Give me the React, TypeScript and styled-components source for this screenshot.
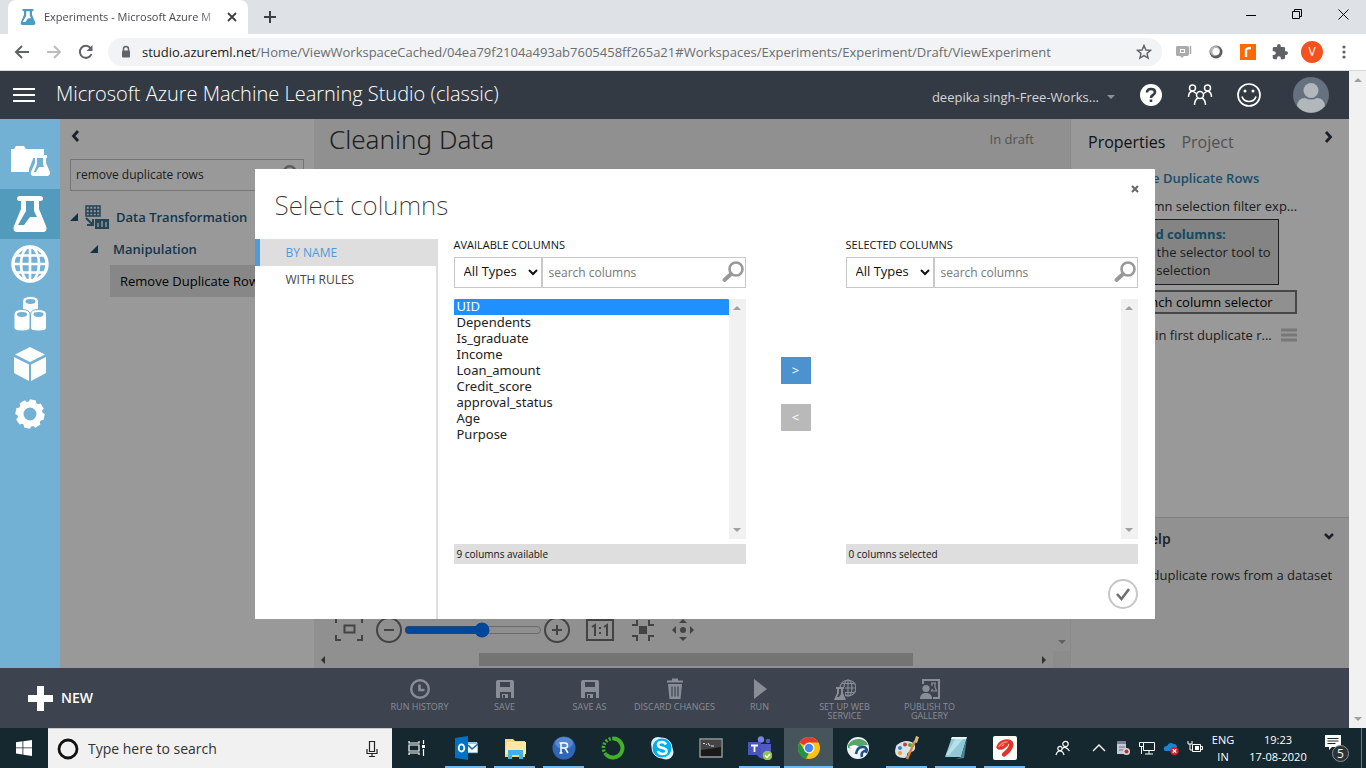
import React from "react";
import styled, { createGlobalStyle, css } from "styled-components";

const GlobalStyle = createGlobalStyle`
  *, *::before, *::after { box-sizing: border-box; }
  body {
    margin: 0;
    font-family: "Open Sans", "Noto Sans", sans-serif;
    font-size: 13px;
    line-height: 18px;
    color: #222;
    background: #fff;
  }
  button, input, select { font: inherit; color: inherit; margin: 0; }
  button { border: 0; padding: 0; background: none; cursor: pointer; }
  svg { display: block; flex: none; }
  h1, h2, h3, p, ul { margin: 0; padding: 0; font-size: inherit; font-weight: 400; }
  ul { list-style: none; }
  a { color: inherit; text-decoration: none; }
`;

const Screen = styled.div`
  display: flex;
  flex-direction: column;
  height: 100vh;
  overflow: hidden;
`;

/* ---------- browser chrome ---------- */

const TabStrip = styled.div`
  display: flex;
  align-items: flex-end;
  height: 34px;
  flex: none;
  padding-left: 8px;
  background: #dee1e6;
`;

const BrowserTab = styled.div`
  display: flex;
  align-items: center;
  gap: 8px;
  width: 240px;
  height: 34px;
  padding: 0 10px 0 12px;
  border-radius: 8px 8px 0 0;
  background: #fff;
  font-size: 11px;
  color: #45494d;
`;

const TabTitle = styled.span`
  flex: 1;
  white-space: nowrap;
  mask-image: linear-gradient(90deg, #000 90%, rgba(0, 0, 0, 0.2));
`;

const NewTab = styled.button`
  display: grid;
  place-items: center;
  width: 44px;
  height: 34px;
`;

const WindowButtons = styled.div`
  display: flex;
  align-self: flex-start;
  margin-left: auto;
  button {
    display: grid;
    place-items: center;
    width: 46px;
    height: 29px;
  }
`;

const Toolbar = styled.div`
  display: flex;
  align-items: center;
  height: 37px;
  flex: none;
  padding: 0 6px;
  border-bottom: 1px solid #d5d7da;
  background: #fff;
`;

const ToolButton = styled.button`
  display: grid;
  place-items: center;
  width: 32px;
  height: 28px;
`;

const AddressBar = styled.div`
  display: flex;
  align-items: center;
  gap: 10px;
  flex: 1;
  height: 28px;
  margin: 0 6px 0 6px;
  padding: 0 10px 0 12px;
  border-radius: 14px;
  background: #f1f3f4;
  color: #6a6d71;
`;

const Url = styled.a`
  flex: 1;
  overflow: hidden;
  white-space: nowrap;
  b { font-weight: 400; color: #202124; }
`;

const Avatar = styled.span`
  display: grid;
  place-items: center;
  width: 22px;
  height: 22px;
  border-radius: 50%;
  background: #f4511e;
  color: #fff;
  font-size: 12px;
`;

/* ---------- page frame ---------- */

const Page = styled.div`
  display: flex;
  flex: 1;
  min-height: 0;
`;

const Site = styled.div`
  display: flex;
  flex-direction: column;
  flex: 1;
  min-width: 0;
`;

const ScrollTrack = styled.div<{ $fill?: string }>`
  display: flex;
  flex-direction: column;
  justify-content: space-between;
  align-items: center;
  width: 17px;
  flex: none;
  padding: 5px 0;
  background: ${(p) => p.$fill ?? "#f1f1f1"};
`;

const SiteHeader = styled.header`
  display: flex;
  align-items: center;
  height: 48px;
  flex: none;
  padding: 0 20px 0 12px;
  background: #333a43;
  color: #fff;
`;

const SiteTitle = styled.h1`
  flex: 1;
  margin-left: 20px;
  padding-bottom: 2px;
  font-size: 20px;
  line-height: 28px;
  font-weight: 300;
`;

const Workspace = styled.button`
  display: flex;
  align-items: center;
  gap: 8px;
  margin-right: 24px;
  padding-top: 4px;
  color: #d3d6d9;
`;

const HeaderIcons = styled.div`
  display: flex;
  align-items: center;
  gap: 24px;
  margin-right: 32px;
`;

const Main = styled.div`
  display: flex;
  flex: 1;
  min-height: 0;
`;

const Rail = styled.nav`
  display: flex;
  flex-direction: column;
  width: 60px;
  flex: none;
  padding-top: 20px;
  background: #72b1d3;
`;

const RailLink = styled.a<{ $active?: boolean }>`
  display: grid;
  place-items: center;
  height: 50px;
  background: ${(p) => (p.$active ? "#529bbd" : "none")};
`;

const Workbench = styled.div`
  position: relative;
  display: flex;
  flex: 1;
  min-width: 0;
`;

const Backdrop = styled.div`
  position: absolute;
  inset: 0;
  display: grid;
  place-items: center;
  background: rgba(0, 0, 0, 0.4);
`;

/* ---------- left palette ---------- */

const Palette = styled.section`
  width: 254px;
  flex: none;
  padding: 7px 10px;
  background: #fff;
`;

const Collapse = styled.button`
  display: grid;
  place-items: center;
  width: 8px;
  height: 20px;
`;

const PaletteSearch = styled.div`
  display: flex;
  align-items: center;
  height: 32px;
  margin: 13px 0 10px;
  padding: 0 5px;
  border: 1px solid #c4c4c4;
  input {
    flex: 1;
    min-width: 0;
    padding: 0;
    border: 0;
    outline: 0;
    background: none;
    color: #333;
    font-size: 12px;
  }
`;

const TreeRow = styled.li<{ $depth: number; $leaf?: boolean }>`
  display: flex;
  align-items: center;
  gap: 7px;
  height: 32px;
  margin-left: ${(p) => p.$depth * 20}px;
  padding-left: ${(p) => (p.$leaf ? 10 : 0)}px;
  background: ${(p) => (p.$leaf ? "#e2e2e2" : "none")};
  color: ${(p) => (p.$leaf ? "#000" : "#245b80")};
  font-weight: ${(p) => (p.$leaf ? 400 : 600)};
  white-space: nowrap;
  overflow: hidden;
`;

const TreeLabel = styled.span<{ $gap?: number }>`
  margin-left: ${(p) => p.$gap ?? 0}px;
`;

/* ---------- canvas ---------- */

const Canvas = styled.section`
  display: flex;
  flex-direction: column;
  flex: 1;
  min-width: 0;
  background: #f1f1f1;
`;

const CanvasHead = styled.div`
  display: flex;
  justify-content: space-between;
  align-items: center;
  height: 52px;
  padding: 0 36px 12px 15px;
  color: #8a8a8a;
  h2 {
    font-family: "Noto Sans", sans-serif;
    font-size: 26px;
    line-height: 36px;
    font-weight: 300;
    color: #333;
  }
`;

const CanvasBody = styled.div`
  display: flex;
  flex: 1;
  min-height: 0;
`;

const CanvasArea = styled.div`
  display: flex;
  flex: 1;
  align-items: flex-end;
  padding: 0 20px 7px 21px;
`;

const ZoomBar = styled.div`
  display: flex;
  align-items: center;
  height: 28px;
`;

const ZoomButton = styled.button<{ $gap?: number }>`
  margin-left: ${(p) => p.$gap ?? 0}px;
`;

const ZoomRange = styled.input`
  width: 138px;
  height: 16px;
  margin: 0 2px;
`;

const HScroll = styled.div`
  display: flex;
  align-items: center;
  justify-content: space-between;
  height: 17px;
  flex: none;
  padding-left: 5px;
`;

const HTrack = styled.div`
  display: flex;
  flex: 1;
  justify-content: center;
  padding-left: 25px;
`;

const HThumb = styled.div`
  width: 63%;
  height: 13px;
  background: #c1c1c1;
`;

const Corner = styled.div`
  width: 17px;
  height: 17px;
  margin-left: 5px;
  background: #e9e9e9;
`;

/* ---------- right panel ---------- */

const Side = styled.section`
  display: flex;
  flex-direction: column;
  width: 279px;
  flex: none;
  border-left: 1px solid #e4e4e4;
  background: #fff;
`;

const Properties = styled.div`
  flex: 1;
  padding: 8px 15px 0 17px;
`;

const SideTabs = styled.div`
  display: flex;
  gap: 16px;
  justify-content: flex-start;
  height: 30px;
  font-size: 16px;
  line-height: 30px;
  button { color: #888; }
  button:first-child { color: #222; }
  button:last-child { align-self: flex-start; height: 20px; margin-left: auto; }
`;

const SideHeading = styled.h3`
  margin: 12px 0 10px 21px;
  color: #2e84ae;
  font-weight: 600;
`;

const SideText = styled.p`
  padding-left: 14px;
  color: #333;
`;

const Summary = styled.div`
  width: 191px;
  margin: 4px 0 5px;
  padding: 5px 2px 5px 20px;
  border: 1px solid #333;
  background: #dcdcdc;
  color: #333;
  b { color: #247ba0; font-weight: 700; }
`;

const Launch = styled.button`
  width: 209px;
  height: 24px;
  padding-left: 16px;
  border: 2px solid #777;
  background: #f1f1f1;
  color: #000;
`;

const RetainRow = styled.div`
  display: flex;
  align-items: center;
  justify-content: space-between;
  width: 209px;
  margin-top: 12px;
  padding-left: 40px;
  color: #333;
`;

const Help = styled.div`
  height: 151px;
  padding: 12px 15px 0 22px;
  border-top: 1px solid #d8d8d8;
  background: #f2f2f2;
  color: #333;
  h3 { font-size: 14px; font-weight: 600; line-height: 18px; padding-left: 4px; }
`;

const HelpHead = styled.div`
  display: flex;
  justify-content: space-between;
  align-items: flex-start;
  margin-bottom: 18px;
`;

/* ---------- dialog ---------- */

const Dialog = styled.div`
  display: flex;
  flex-direction: column;
  width: 900px;
  height: 450px;
  background: #fff;
`;

const DialogHead = styled.div`
  display: flex;
  justify-content: space-between;
  align-items: flex-start;
  height: 70px;
  flex: none;
  padding: 15px 15px 0 20px;
  h2 {
    font-family: "Noto Sans", sans-serif;
    font-size: 26px;
    line-height: 42px;
    font-weight: 200;
    color: #333;
  }
  button { height: 10px; }
`;

const DialogBody = styled.div`
  display: flex;
  flex: 1;
`;

const DialogNav = styled.div`
  width: 183px;
  border-right: 2px solid #dedede;
`;

const NavItem = styled.button<{ $active?: boolean }>`
  display: block;
  width: 100%;
  height: 27px;
  padding: 1px 0 0 26px;
  border-left: 5px solid ${(p) => (p.$active ? "#4f9bd8" : "transparent")};
  background: ${(p) => (p.$active ? "#dedede" : "none")};
  color: ${(p) => (p.$active ? "#4f9bd8" : "#444")};
  font-size: 12px;
  text-align: left;
`;

const Picker = styled.div`
  display: flex;
  flex-direction: column;
  flex: 1;
  padding: 0 17px 10px 16px;
`;

const Columns = styled.div`
  display: flex;
`;

const ColumnBox = styled.div`
  flex: 1;
`;

const ColumnTitle = styled.h3`
  height: 18px;
  line-height: 12px;
  font-size: 11px;
  color: #111;
`;

const Filter = styled.div`
  display: flex;
  height: 31px;
  margin-bottom: 11px;
  border: 1px solid #c8c8c8;
  select {
    width: 88px;
    padding: 0 0 2px 5px;
    border: 0;
    border-right: 2px solid #c8c8c8;
    background: #fff;
    color: #111;
    outline: 0;
  }
  input {
    flex: 1;
    min-width: 0;
    padding: 1px 0 0 6px;
    border: 0;
    outline: 0;
    font-size: 12px;
  }
  input::placeholder { color: #777; }
`;

const ListFrame = styled.div`
  display: flex;
  height: 240px;
  margin-bottom: 5px;
`;

const List = styled.select`
  flex: 1;
  padding: 0;
  border: 0;
  outline: 0;
  overflow: hidden;
  font-family: "Noto Sans", sans-serif;
  font-size: 13px;
  background: #fff;
  option {
    display: flex;
    align-items: center;
    height: 16px;
    min-height: 16px;
    padding: 0 3px 1px;
    color: #222;
  }
  option:checked {
    background: #1e90ff linear-gradient(#1e90ff, #1e90ff);
    -webkit-text-fill-color: #fff;
  }
`;

const Status = styled.p`
  height: 20px;
  padding-left: 3px;
  background: #dedede;
  color: #111;
  font-size: 10px;
  line-height: 20px;
`;

const Movers = styled.div`
  display: flex;
  flex-direction: column;
  align-items: center;
  gap: 20px;
  width: 100px;
  padding-top: 118px;
`;

const Mover = styled.button<{ $on?: boolean }>`
  width: 30px;
  height: 27px;
  background: ${(p) => (p.$on ? "#4b92cf" : "#b9b9b9")};
  color: #fff;
`;

const Confirm = styled.button`
  align-self: flex-end;
  margin-top: 15px;
`;

/* ---------- command bar ---------- */

const CommandBar = styled.footer`
  display: grid;
  grid-template-columns: 1fr auto 1fr;
  height: 60px;
  flex: none;
  background: #3d434f;
`;

const NewButton = styled.button`
  display: flex;
  align-items: center;
  gap: 8px;
  padding-left: 28px;
  color: #fff;
  font-size: 14px;
  font-weight: 600;
`;

const Commands = styled.div`
  display: flex;
`;

const Command = styled.button`
  display: flex;
  flex-direction: column;
  align-items: center;
  gap: 2px;
  width: 85px;
  padding-top: 10px;
  color: #898e96;
  font-size: 9px;
  line-height: 9px;
  span { max-width: 82px; }
`;

/* ---------- taskbar ---------- */

const Taskbar = styled.div`
  display: flex;
  height: 40px;
  flex: none;
  background: #16282f;
  color: #fff;
`;

const StartButton = styled.button`
  display: grid;
  place-items: center;
  width: 48px;
`;

const TaskSearch = styled.label`
  display: flex;
  align-items: center;
  gap: 9px;
  width: 344px;
  padding: 0 13px 0 9px;
  border-top: 1px solid #c8c8c8;
  background: #f1f1f1;
  color: #333;
  input {
    flex: 1;
    min-width: 0;
    padding: 0;
    border: 0;
    outline: 0;
    background: none;
    font-size: 14px;
  }
  input::placeholder { color: #333; }
`;

const Apps = styled.div`
  display: flex;
`;

const TaskApp = styled.button<{ $open?: boolean; $active?: boolean }>`
  position: relative;
  display: grid;
  place-items: center;
  width: 49px;
  ${(p) => p.$active && css`background: #46555c;`}
  ${(p) =>
    (p.$open || p.$active) &&
    css`
      &::after {
        content: "";
        position: absolute;
        bottom: 0;
        left: ${p.$active ? 0 : 4}px;
        right: ${p.$active ? 0 : 4}px;
        height: 2px;
        background: #76b9ed;
      }
    `}
`;

const Tray = styled.div`
  display: flex;
  align-items: center;
  gap: 8px;
  margin-left: auto;
  padding-right: 4px;
  text-align: center;
`;

const TrayText = styled.div<{ $w: number }>`
  width: ${(p) => p.$w}px;
  line-height: 17px;
  font-size: 11px;
  white-space: nowrap;
`;

const ShowDesktop = styled.div`
  width: 1px;
  height: 40px;
  background: #6c787d;
`;

/* ---------- drawings ---------- */

const Svg = ({ w, h = w, vb, children, label }: { w: number; h?: number; vb?: string; children: React.ReactNode; label?: string }) => (
  <svg width={w} height={h} viewBox={vb ?? `0 0 ${w} ${h}`} fill="none" aria-hidden={label ? undefined : true} aria-label={label}>
    {children}
  </svg>
);

const Flask = ({ w = 34, h = 36, fill = "#fff", drop = "#529bbd" }) => (
  <Svg w={w} h={h} vb="0 0 34 36">
    <path d="M7 0h20q3 0 3 2.500t-3 2.500h-1v8l7 17q2 6-4 6H5q-6 0-4-6l7-17V5H7Q4 5 4 2.500T7 0Z" fill={fill} />
    <path d="M13 5h8v10l3 6h-7l-6 8H5l8-14Z" fill={drop} />
  </Svg>
);

const Magnifier = ({ size = 24, color = "#999" }) => (
  <Svg w={size} vb="0 0 24 24">
    <circle cx="15" cy="9" r="6.500" stroke={color} strokeWidth="2.600" />
    <path d="M10 14 3.500 20" stroke={color} strokeWidth="4" strokeLinecap="round" />
  </Svg>
);

const Arrow = ({ dir = "up", color = "#a0a0a0" }: { dir?: "up" | "down" | "left" | "right"; color?: string }) => {
  const d = { up: "M0 6 4 2l4 4Z", down: "M0 2h8L4 6Z", left: "M6 0v8L2 4Z", right: "M2 0v8l4-4Z" }[dir];
  return <Svg w={8}><path d={d} fill={color} /></Svg>;
};

const Chevron = ({ d }: { d: string }) => (
  <Svg w={10} h={12}><path d={d} stroke="#303844" strokeWidth="2.800" /></Svg>
);

const Twist = () => <Svg w={8}><path d="M8 0v8H0Z" fill="#1d5576" /></Svg>;

const Scrollbar = ({ fill, color }: { fill?: string; color?: string }) => (
  <ScrollTrack $fill={fill}>
    <Arrow dir="up" color={color} />
    <Arrow dir="down" color={color} />
  </ScrollTrack>
);

const FolderFlask = () => (
  <Svg w={40} h={42}>
    <path d="M1 6h3l2-3h8l2 3h18v6H23v4l-4 10v3H1Z" fill="#fff" />
    <path d="M23 12h14v3h-1v5l4 9q0 4-3 4H24q-4 0-3-4l4-9v-5h-2Z" fill="#fff" />
    <path d="M27 15h6v6l1 3h-5l-3 5h-2l3-8Z" fill="#72b1d3" />
  </Svg>
);

const Globe = () => (
  <Svg w={38}>
    <g stroke="#fff" strokeWidth="2.600">
      <circle cx="19" cy="19" r="17" strokeWidth="3.400" />
      <ellipse cx="19" cy="19" rx="9" ry="17" />
      <path d="M19 2v34M2 19h34M5 10.500h28M5 27.500h28" />
    </g>
  </Svg>
);

const Cylinders = () => (
  <Svg w={34} h={36}>
    {[[10, 1], [1.5, 14], [18, 14]].map(([x, y]) => (
      <g key={x} transform={`translate(${x} ${y})`}>
        <path d="M-.500 4Q0-.500 7.500-.500T15.500 4v14q0 3-8 3t-8-3Z" fill="#fff" stroke="#72b1d3" strokeWidth="1" />
        <ellipse cx="7.500" cy="4.500" rx="5" ry="2.400" fill="#72b1d3" />
      </g>
    ))}
  </Svg>
);

const Cube = () => (
  <Svg w={32} h={34}>
    <path d="M16 0 31 7.500 16 15 1 7.500ZM0 10l15 7.500V34L0 26ZM32 10l-15 7.500V34l15-8Z" fill="#fff" />
  </Svg>
);

const Gear = () => (
  <Svg w={32}>
    <circle cx="16" cy="16" r="9.500" stroke="#fff" strokeWidth="6" />
    {[0, 45, 90, 135, 180, 225, 270, 315].map((a) => (
      <path key={a} d="M11.500 6 13 1.500h6L20.500 6Z" fill="#fff" transform={`rotate(${a + 12} 16 16)`} />
    ))}
  </Svg>
);

const TransformIcon = () => (
  <Svg w={24} h={24}>
    <path d="M1 1h14v10H1ZM1 4.500h14M1 8h14M4.500 1v10M8 1v10M11.500 1v10" stroke="#3d7391" strokeWidth="1.500" />
    <path d="M1 13l6 6M8 14v6H2" stroke="#3d7391" strokeWidth="2" />
    <path d="M10 14h14v10H10Z" fill="#3d7391" />
    <path d="M13 22v-4M17 22v-6M21 22v-5" stroke="#e6eef2" strokeWidth="1.600" />
  </Svg>
);

const zoomInk = "#707070";

const cmdIcons: Record<string, React.ReactNode> = {
  history: (
    <>
      <circle cx="11" cy="11" r="8.800" stroke="#898e96" strokeWidth="2.400" />
      <path d="M10.500 6.500v5.500h5" stroke="#898e96" strokeWidth="2.600" />
    </>
  ),
  save: (
    <>
      <path d="M4 2h14q2 0 2 2v16h-3v-6H6v6H3q-1 0-1-1V4q0-2 2-2Z" fill="#898e96" />
      <path d="M6 4h10v5H6Z" fill="#3d434f" />
      <path d="M8 16h6v4H8Z" fill="#898e96" />
      <path d="M9 17h2v3H9Z" fill="#3d434f" />
    </>
  ),
  trash: (
    <>
      <path d="M3 3.500h16M8 1.500h6" stroke="#898e96" strokeWidth="1.800" />
      <path d="M4 6h14l-1.500 15h-11Z" fill="#898e96" />
      <path d="M8 8.500v10M11 8.500v10M14 8.500v10" stroke="#3d434f" strokeWidth="1.200" />
    </>
  ),
  run: <path d="M5 1v20l13-10Z" fill="#898e96" />,
  web: (
    <>
      <g stroke="#898e96" strokeWidth="1.200">
        <circle cx="14" cy="10" r="8" />
        <ellipse cx="14" cy="10" rx="4" ry="8" />
        <path d="M6 10h16M14 2v16M8 5.500h12M8 14.500h12" />
      </g>
      <path d="M0 9h11v15H0Z" fill="#3d434f" />
      <path d="M2 9h8v2H9v4l3 7q0 2-2 2H1q-2 0-1-2l3-7v-4H2Z" fill="#898e96" />
      <path d="M5 11h2v5l-2 3H3l2-4Z" fill="#3d434f" />
    </>
  ),
  gallery: (
    <>
      <path d="M4 6V2h16v18h-6" stroke="#898e96" strokeWidth="2" />
      <circle cx="7" cy="10.500" r="3.600" fill="#898e96" />
      <path d="M1 21q0-5 4.500-6h3q4.500 1 4.500 6Z" fill="#898e96" />
      <path d="M12 5h5M13 5v3M16 5v4l1.500 4h-5l1-2" stroke="#898e96" strokeWidth="1.200" />
    </>
  ),
};

const commands = [
  ["history", "RUN HISTORY"],
  ["save", "SAVE"],
  ["save", "SAVE AS"],
  ["trash", "DISCARD CHANGES"],
  ["run", "RUN"],
  ["web", "SET UP WEB SERVICE"],
  ["gallery", "PUBLISH TO GALLERY"],
];

type App = { name: string; open?: boolean; active?: boolean; icon: React.ReactNode };

const apps: App[] = [
  {
    name: "Outlook", open: true,
    icon: (
      <>
        <path d="M12 6h11v11H12Z" fill="#fff" />
        <path d="M13 7h11v10H13Z" fill="#fff" stroke="#0a6fc2" strokeWidth=".8" />
        <path d="m14 9 4 4 6-5" stroke="#0a6fc2" strokeWidth="1.600" />
        <path d="M1 2 14 0v24L1 22Z" fill="#0072c6" />
        <ellipse cx="7.500" cy="12" rx="2.800" ry="3.600" stroke="#fff" strokeWidth="1.800" />
      </>
    ),
  },
  {
    name: "File Explorer", open: true,
    icon: (
      <>
        <path d="M2 3h8l2 2h10v16H2Z" fill="#f8d775" />
        <path d="M4 6h19v12H2Z" fill="#ffe9a2" />
        <path d="M5 23v-9h15v9h-4v-4H9v4Z" fill="#3fb1e8" />
      </>
    ),
  },
  {
    name: "RStudio", open: true,
    icon: (
      <>
        <circle cx="12" cy="12" r="11.500" fill="#2f66b8" />
        <ellipse cx="12" cy="7" rx="9" ry="6" fill="#6fa0dd" opacity=".6" />
        <path d="M9 17V7h4a2.500 2.500 0 0 1 0 5H9m4 0 3 5M7.500 17h3M7.500 7H10" stroke="#fff" strokeWidth="1.500" />
      </>
    ),
  },
  {
    name: "Anaconda",
    icon: (
      <>
        <path d="M12 2.500a9.500 9.500 0 1 1-7 16" stroke="#43b02a" strokeWidth="4" />
        <path d="M5 18.500A9.500 9.500 0 0 1 12 2.500" stroke="#43b02a" strokeWidth="3.500" strokeDasharray="2 1.500" />
      </>
    ),
  },
  {
    name: "Skype",
    icon: (
      <>
        <circle cx="8" cy="8" r="7" fill="#d9f1fc" />
        <circle cx="16" cy="16" r="7.500" fill="#d9f1fc" />
        <circle cx="12" cy="12" r="10" fill="#00aff0" stroke="#d9f1fc" />
        <path d="M16 8.500Q14.500 6 12 6 8 6 8 8.800q0 2.200 4 3 4.500.9 4.500 3.400Q16.500 18 12.500 18 9 18 7.800 15.200" stroke="#fff" strokeWidth="2.600" />
      </>
    ),
  },
  {
    name: "Command Prompt",
    icon: (
      <>
        <path d="M1 3h22v18H1Z" fill="#1a1a1a" stroke="#9a9a9a" strokeWidth="1.400" />
        <path d="M2 4h20v7L2 14Z" fill="#444" />
        <path d="M4 7.500h2M7 8.500h1M9 7l2 3M12 10h3" stroke="#ddd" />
      </>
    ),
  },
  {
    name: "Teams", open: true,
    icon: (
      <>
        <circle cx="13" cy="3.500" r="3.200" fill="#7b83eb" />
        <circle cx="20" cy="5" r="2.300" fill="#5059c9" />
        <path d="M8 8h15v8q0 6-7 7-7-1-8-7Z" fill="#5059c9" />
        <path d="M0 6h13v13H0Z" fill="#4b53bc" />
        <path d="M3 9.500h7M6.500 9.500V16" stroke="#fff" strokeWidth="1.800" />
        <circle cx="19.500" cy="19.500" r="4.800" fill="#92c353" />
        <path d="m17 19.500 2 2 3-3.500" stroke="#fff" strokeWidth="1.500" />
      </>
    ),
  },
  {
    name: "Chrome", active: true,
    icon: (
      <>
        <circle cx="12" cy="12" r="11" fill="#fbc116" />
        <path d="M12 12 2.500 6.500A11 11 0 0 1 21.500 6.500H12Z" fill="#e33b2e" />
        <path d="M2.500 6.500 8 15l4 2-3 5.800A11 11 0 0 1 2.500 6.500Z" fill="#229342" />
        <circle cx="12" cy="12" r="5.400" fill="#fff" />
        <circle cx="12" cy="12" r="4.200" fill="#4285f4" />
      </>
    ),
  },
  {
    name: "AnyConnect",
    icon: (
      <>
        <circle cx="12" cy="12" r="11" fill="#eef3f4" />
        <path d="M2 9Q6 2 14 3q6 1 8 6l-7 1-5 3-8-1Z" fill="#57a56c" />
        <path d="M3 11q6-4 10 0l-5 3Z" fill="#fff" />
        <path d="M10 18q1-7 7-7 5 0 3 6M16 21q-2-6 6-7" stroke="#1f4f8a" strokeWidth="2.600" />
      </>
    ),
  },
  {
    name: "Paint", open: true,
    icon: (
      <>
        <path d="M10 5Q0 7 0 15q0 7 9 7 3 0 3-3t4-3q5-1 4-6T10 5Z" fill="#d7e4ee" />
        <circle cx="5" cy="12" r="2" fill="#3b82d0" />
        <circle cx="10" cy="8.500" r="2" fill="#d23c2e" />
        <circle cx="5" cy="17" r="2" fill="#e9a420" />
        <circle cx="15" cy="9" r="2" fill="#53a742" />
        <path d="M12 23 20 5" stroke="#d98732" strokeWidth="2.400" />
        <path d="m19 6 2-6 3 1-2 6Z" fill="#d8b98d" />
      </>
    ),
  },
  {
    name: "Notepad", open: true,
    icon: (
      <>
        <path d="M8 1h15l-6 20H1Z" fill="#8fc9d6" />
        <path d="M12 2h8L5 19H2Z" fill="#b9dfe7" />
        <path d="M8 1h15l-1 2H7Z" fill="#e9f4f6" />
        <path d="m23 2-3 20-8 1 5-2Z" fill="#4d8390" />
      </>
    ),
  },
  {
    name: "Airtel", open: true,
    icon: (
      <>
        <rect width="24" height="24" rx="2" fill="#fff" />
        <path d="M5.500 11Q8 5.500 14 5.500q5.500 0 4 4.500-1.500 4.500-7 8.500" stroke="#e0342b" strokeWidth="4.400" strokeLinecap="round" />
        <path d="M6 12q4 1 8-4" stroke="#e0342b" strokeWidth="3" strokeLinecap="round" />
        <path d="M6 10.500q3-4.500 8-4.500" stroke="#f58a76" strokeWidth="1.400" strokeLinecap="round" />
      </>
    ),
  },
];

const columnNames = ["UID", "Dependents", "Is_graduate", "Income", "Loan_amount", "Credit_score", "approval_status", "Age", "Purpose"];

/* ---------- sections ---------- */

function Browser() {
  const grey = "#5f6368";
  return (
    <>
      <TabStrip>
        <BrowserTab>
          <Flask w={16} h={16} fill="#4a9cc0" drop="#fff" />
          <TabTitle>Experiments - Microsoft Azure M</TabTitle>
          <button aria-label="Close tab">
            <Svg w={12}><path d="m2 2 8 8M10 2l-8 8" stroke="#3c4043" strokeWidth="1.800" /></Svg>
          </button>
        </BrowserTab>
        <NewTab aria-label="New tab">
          <Svg w={12}><path d="M6 0v12M0 6h12" stroke="#3c4043" strokeWidth="2" /></Svg>
        </NewTab>
        <WindowButtons>
          <button aria-label="Minimize"><Svg w={10}><path d="M0 5.500h10" stroke="#000" /></Svg></button>
          <button aria-label="Restore"><Svg w={11}><path d="M.5 2.500h7v7h-7ZM2.500 2.500v-2h7v7h-2" stroke="#000" /></Svg></button>
          <button aria-label="Close"><Svg w={11}><path d="m.5.5 10 10M10.500.5l-10 10" stroke="#000" /></Svg></button>
        </WindowButtons>
      </TabStrip>
      <Toolbar>
        <ToolButton aria-label="Back"><Svg w={16}><path d="M15 8H2M8 2 2 8l6 6" stroke={grey} strokeWidth="2" /></Svg></ToolButton>
        <ToolButton aria-label="Forward"><Svg w={16}><path d="M1 8h13M8 2l6 6-6 6" stroke="#babcbe" strokeWidth="2" /></Svg></ToolButton>
        <ToolButton aria-label="Reload">
          <Svg w={16}>
            <path d="M13.500 10A6 6 0 1 1 12.500 4" stroke={grey} strokeWidth="2" />
            <path d="M14.500 1v6h-6Z" fill={grey} />
          </Svg>
        </ToolButton>
        <AddressBar>
          <Svg w={12} h={14}>
            <path d="M3.500 6V4a2.500 2.500 0 0 1 5 0v2" stroke={grey} strokeWidth="1.500" />
            <rect x="2" y="5.500" width="8" height="7" rx="1" fill={grey} />
          </Svg>
          <Url href="#url">
            <b>studio.azureml.net</b>/Home/ViewWorkspaceCached/04ea79f2104a493ab7605458ff265a21#Workspaces/Experiments/Experiment/Draft/ViewExperiment
          </Url>
          <Svg w={16}><path d="m8 1.500 1.900 4.500 4.600.4-3.500 3 1.100 4.700L8 11.600l-4.100 2.500L5 9.400l-3.500-3L6.100 6Z" stroke={grey} strokeWidth="1.400" /></Svg>
        </AddressBar>
        <ToolButton aria-label="Chat extension">
          <Svg w={18} h={16}>
            <path d="M2 2h10q2 0 2 2v6q0 2-2 2H9l-2 2-2-2H2q-1 0-1-2V4q0-2 1-2Z" fill="#a9abad" />
            <rect x="5.500" y="5.500" width="4" height="3" stroke="#fff" />
            <path d="M15.500 2v8" stroke="#a9abad" strokeWidth="1.500" />
          </Svg>
        </ToolButton>
        <ToolButton aria-label="Lens extension">
          <Svg w={14}>
            <circle cx="7" cy="7" r="6.500" fill="#5c5e61" />
            <circle cx="6" cy="6" r="5" fill="#b5b7b9" />
            <circle cx="7" cy="6.500" r="3.500" fill="#fff" />
          </Svg>
        </ToolButton>
        <ToolButton aria-label="R extension">
          <Svg w={16}><path d="M0 0h16v16H0Z" fill="#ff6a00" /><path d="M6 13V6q0-2 5-2" stroke="#fff" strokeWidth="2.400" /></Svg>
        </ToolButton>
        <ToolButton aria-label="Extensions">
          <Svg w={16} vb="1 1 22 22">
            <path fill={grey} d="M20.500 11H19V7a2 2 0 0 0-2-2h-4V3.500a2.500 2.500 0 0 0-5 0V5H4a2 2 0 0 0-2 2v3.800h1.500a2.700 2.700 0 0 1 0 5.400H2V20a2 2 0 0 0 2 2h3.800v-1.500a2.700 2.700 0 0 1 5.400 0V22H17a2 2 0 0 0 2-2v-4h1.500a2.500 2.500 0 0 0 0-5Z" />
          </Svg>
        </ToolButton>
        <ToolButton aria-label="Profile"><Avatar>V</Avatar></ToolButton>
        <ToolButton aria-label="Menu">
          <Svg w={4} h={14}><g fill={grey}><circle cx="2" cy="2" r="1.600" /><circle cx="2" cy="7" r="1.600" /><circle cx="2" cy="12" r="1.600" /></g></Svg>
        </ToolButton>
      </Toolbar>
    </>
  );
}

function Header() {
  return (
    <SiteHeader>
      <button aria-label="Menu"><Svg w={24} h={16}><path d="M1 2h22M1 8h22M1 14h22" stroke="#fff" strokeWidth="2" /></Svg></button>
      <SiteTitle>Microsoft Azure Machine Learning Studio (classic)</SiteTitle>
      <Workspace>deepika singh-Free-Works... <Arrow dir="down" color="#8d9299" /></Workspace>
      <HeaderIcons>
        <button aria-label="Help">
          <Svg w={24}>
            <circle cx="12" cy="12" r="11" fill="#fff" />
            <path d="M8 9.500Q8 6 12 6t4 3q0 2-2 3t-2 3" stroke="#333a43" strokeWidth="2.600" />
            <path d="M10.700 16.500h2.600V19h-2.600Z" fill="#333a43" />
          </Svg>
        </button>
        <button aria-label="Community">
          <Svg w={26} h={24}>
            <g stroke="#fff" strokeWidth="1.500">
              <circle cx="5.500" cy="5" r="3" /><circle cx="20.500" cy="5" r="3" /><circle cx="13" cy="12" r="3.500" />
              <path d="M1.500 14q0-5 4-6l4.500 3M24.500 14q0-5-4-6L16 11M7.500 22q0-5 3.500-7M18.500 22q0-5-3.500-7" />
            </g>
          </Svg>
        </button>
        <button aria-label="Feedback">
          <Svg w={24}>
            <circle cx="12" cy="12" r="11" stroke="#fff" strokeWidth="1.700" />
            <path d="M5 13.500q1.500 5 7 5t7-5" stroke="#fff" strokeWidth="1.700" />
            <circle cx="8" cy="8" r="1.500" fill="#fff" /><circle cx="16" cy="8" r="1.500" fill="#fff" />
          </Svg>
        </button>
      </HeaderIcons>
      <button aria-label="Account">
        <Svg w={36}>
          <circle cx="18" cy="18" r="18" fill="#66717f" />
          <circle cx="18" cy="13.500" r="7.500" fill="#b2b7bc" />
          <path d="M4 29Q5 21 12 21q6 3 12 0 7 0 8 8a18 18 0 0 1-28 0Z" fill="#b2b7bc" />
        </Svg>
      </button>
    </SiteHeader>
  );
}

function LeftPalette() {
  return (
    <Palette>
      <Collapse aria-label="Collapse palette"><Chevron d="M8 1 3.500 6 8 11" /></Collapse>
      <PaletteSearch>
        <input aria-label="Search modules" defaultValue="remove duplicate rows" />
        <Magnifier size={22} />
      </PaletteSearch>
      <ul>
        <TreeRow $depth={0}><Twist /><TransformIcon /><TreeLabel>Data Transformation</TreeLabel></TreeRow>
        <TreeRow $depth={1}><Twist /><TreeLabel $gap={8}>Manipulation</TreeLabel></TreeRow>
        <TreeRow $depth={2} $leaf>Remove Duplicate Rows</TreeRow>
      </ul>
    </Palette>
  );
}

function ExperimentCanvas() {
  return (
    <Canvas>
      <CanvasHead><h2>Cleaning Data</h2><span>In draft</span></CanvasHead>
      <CanvasBody>
        <CanvasArea>
          <ZoomBar>
            <ZoomButton aria-label="Fit to screen">
              <Svg w={28}>
                <path d="M1 7V2h5M22 2h5v5M27 19v5h-5M6 24H1v-5M9.500 9.500h10v7h-10Z" stroke={zoomInk} strokeWidth="2" />
              </Svg>
            </ZoomButton>
            <ZoomButton $gap={13} aria-label="Zoom out">
              <Svg w={26}><circle cx="13" cy="13" r="12" stroke={zoomInk} strokeWidth="2" /><path d="M8 13h10" stroke={zoomInk} strokeWidth="2" /></Svg>
            </ZoomButton>
            <ZoomRange type="range" aria-label="Zoom" min={0} max={100} defaultValue={57} />
            <ZoomButton aria-label="Zoom in">
              <Svg w={26}><circle cx="13" cy="13" r="12" stroke={zoomInk} strokeWidth="2" /><path d="M8 13h10M13 8v10" stroke={zoomInk} strokeWidth="2" /></Svg>
            </ZoomButton>
            <ZoomButton $gap={16} aria-label="Actual size">
              <Svg w={28} h={22}>
                <path d="M1 1h26v20H1Z" stroke={zoomInk} strokeWidth="2" />
                <path d="M6 8l3-2v11M18 8l3-2v11" stroke={zoomInk} strokeWidth="2" />
                <path d="M13 8h2v2h-2ZM13 13h2v2h-2Z" fill={zoomInk} />
              </Svg>
            </ZoomButton>
            <ZoomButton $gap={18} aria-label="Collapse">
              <Svg w={22}>
                <path d="M0 6h5V1M22 6h-5V1M0 17h5v5M22 17h-5v5" stroke={zoomInk} strokeWidth="2" />
                <path d="M7 7h8v8H7Z" fill={zoomInk} />
              </Svg>
            </ZoomButton>
            <ZoomButton $gap={18} aria-label="Pan">
              <Svg w={22}>
                <path d="m7 4 4-4 4 4ZM7 18l4 4 4-4ZM4 7l-4 4 4 4ZM18 7l4 4-4 4Z" fill={zoomInk} />
                <circle cx="11" cy="11" r="3" fill={zoomInk} />
              </Svg>
            </ZoomButton>
          </ZoomBar>
        </CanvasArea>
        <Scrollbar fill="#f1f1f1" color="#a0a0a0" />
      </CanvasBody>
      <HScroll>
        <Arrow dir="left" color="#505050" />
        <HTrack><HThumb /></HTrack>
        <Arrow dir="right" color="#505050" />
        <Corner />
      </HScroll>
    </Canvas>
  );
}

function SidePanel() {
  return (
    <Side>
      <Properties>
        <SideTabs>
          <button>Properties</button>
          <button>Project</button>
          <button aria-label="Collapse properties"><Chevron d="M2 1l4.500 5L2 11" /></button>
        </SideTabs>
        <SideHeading>Remove Duplicate Rows</SideHeading>
        <SideText>Key column selection filter exp...</SideText>
        <Summary>
          <b>Selected columns:</b>
          <p>Launch the selector tool to make a selection</p>
        </Summary>
        <Launch>Launch column selector</Launch>
        <RetainRow>
          <span>Retain first duplicate r...</span>
          <Svg w={16} h={14}><path d="M0 2h16M0 7h16M0 12h16" stroke="#c8c8c8" strokeWidth="3" /></Svg>
        </RetainRow>
      </Properties>
      <Help>
        <HelpHead>
          <h3>Quick Help</h3>
          <Svg w={10} h={12}><path d="m1 4 4 4 4-4" stroke="#303844" strokeWidth="2.500" /></Svg>
        </HelpHead>
        <p>Removes duplicate rows from a dataset</p>
      </Help>
    </Side>
  );
}

function ColumnPane({ title, status, names, id }: { title: string; status: string; names: string[]; id: string }) {
  return (
    <ColumnBox>
      <ColumnTitle id={id}>{title}</ColumnTitle>
      <Filter>
        <select aria-label={`${title} type`}><option>All Types</option></select>
        <input aria-label={`${title} search`} placeholder="search columns" />
        <button aria-label="Search"><Magnifier /></button>
      </Filter>
      <ListFrame>
        <List multiple size={15} aria-labelledby={id} defaultValue={names.slice(0, 1)}>
          {names.map((n) => <option key={n}>{n}</option>)}
        </List>
        <Scrollbar />
      </ListFrame>
      <Status>{status}</Status>
    </ColumnBox>
  );
}

function SelectColumns() {
  return (
    <Dialog role="dialog" aria-label="Select columns">
      <DialogHead>
        <h2>Select columns</h2>
        <button aria-label="Close"><Svg w={10}><path d="m2 2 6 6M8 2 2 8" stroke="#6a6a6a" strokeWidth="2.200" /></Svg></button>
      </DialogHead>
      <DialogBody>
        <DialogNav>
          <NavItem $active>BY NAME</NavItem>
          <NavItem>WITH RULES</NavItem>
        </DialogNav>
        <Picker>
          <Columns>
            <ColumnPane id="available" title="AVAILABLE COLUMNS" status="9 columns available" names={columnNames} />
            <Movers>
              <Mover $on aria-label="Add">&gt;</Mover>
              <Mover aria-label="Remove">&lt;</Mover>
            </Movers>
            <ColumnPane id="selected" title="SELECTED COLUMNS" status="0 columns selected" names={[]} />
          </Columns>
          <Confirm aria-label="OK">
            <Svg w={30}>
              <circle cx="15" cy="15" r="14" stroke="#c6c6c6" strokeWidth="2" />
              <path d="m9 15 4.500 5L21 10" stroke="#6f6f6f" strokeWidth="2.600" />
            </Svg>
          </Confirm>
        </Picker>
      </DialogBody>
    </Dialog>
  );
}

function WindowsTaskbar() {
  return (
    <Taskbar>
      <StartButton aria-label="Start">
        <Svg w={16}><path d="M0 2.200 6.500 1.300v6.200H0ZM7.300 1.200 16 0v7.500H7.300ZM0 8.300h6.500v6.200L0 13.600ZM7.300 8.300H16V16l-8.700-1.300Z" fill="#fff" /></Svg>
      </StartButton>
      <TaskSearch>
        <Svg w={22}><circle cx="11" cy="11" r="9" stroke="#111" strokeWidth="2.800" /></Svg>
        <input aria-label="Search" placeholder="Type here to search" />
        <Svg w={14} h={18}><path d="M4.500 1.500h5v10h-5ZM2 9v4.500h10V9M7 14v3M4 16.500h6" stroke="#222" strokeWidth="1.200" /></Svg>
      </TaskSearch>
      <TaskApp aria-label="Task view">
        <Svg w={18} h={16}><path d="M1 1v2h10V1M1 15v-2h10v2M1 5h10v6H1ZM15.500 0v4M15.500 9v7" stroke="#fff" strokeWidth="1.200" /><path d="M14 5h3v3h-3Z" fill="#fff" /></Svg>
      </TaskApp>
      <Apps>
        {apps.map((a) => (
          <TaskApp key={a.name} aria-label={a.name} $open={a.open} $active={a.active}>
            <Svg w={24}>{a.icon}</Svg>
          </TaskApp>
        ))}
      </Apps>
      <Tray>
        <Svg w={28} h={16}>
          <g stroke="#fff" strokeWidth="1.200">
            <circle cx="10.500" cy="4" r="2.700" /><path d="M7.500 8.500q3-3 7 2.500" />
            <circle cx="5" cy="8.500" r="2.200" /><path d="M1 15q1-4 4-4t4 4" />
          </g>
        </Svg>
        <Svg w={16}><path d="m2 11 6-6 6 6" stroke="#fff" strokeWidth="1.400" /></Svg>
        <Svg w={16}>
          <path d="M2 1h9v13H2Z" fill="#c8cad8" /><path d="M2 1h9v3H2Z" fill="#7c7ea4" /><path d="M4 7h6M4 10h5" stroke="#777" />
          <circle cx="11.500" cy="11.500" r="3.500" fill="#d9d9d9" /><circle cx="11.500" cy="11.500" r="2" fill="#c92b2b" />
        </Svg>
        <Svg w={16}>
          <path d="M4.500 2.500h11v8h-11ZM10 10.500V14M6 14h8M.5 2.500h4v4h-4ZM2.500 6.500V14" stroke="#fff" />
        </Svg>
        <Svg w={16}>
          <path d="M1 10q-1-4 3-4 2-5 7-2 3 0 3 4v3H3q-2 0-2-1Z" fill="#1b83d6" />
          <circle cx="11.500" cy="11" r="4.300" fill="#d5202c" /><path d="m9.800 9.300 3.400 3.400M13.200 9.300l-3.400 3.400" stroke="#fff" strokeWidth="1.300" />
        </Svg>
        <Svg w={16}>
          <path d="M5.500 4.500h8v7h-8ZM13.500 6.500h2v3h-2M1 1v3h4V1M3 4v6h2" stroke="#fff" /><path d="M8 6h4v4H8Z" fill="#fff" />
        </Svg>
        <TrayText $w={24}>ENG<br />IN</TrayText>
        <TrayText $w={70}>19:23<br />17-08-2020</TrayText>
        <Svg w={32} h={30}>
          <path d="M4 2h16v12H11l-3 3v-3H4Z" fill="#fff" />
          <path d="M6.500 5.500h11M6.500 8h11M6.500 10.500h8" stroke="#16282f" />
          <circle cx="19.500" cy="20.500" r="8" fill="#2c3236" stroke="#8a9296" />
          <text x="19.500" y="25" textAnchor="middle" fontSize="12" fill="#fff">5</text>
        </Svg>
        <ShowDesktop />
      </Tray>
    </Taskbar>
  );
}

export default function App() {
  return (
    <Screen>
      <GlobalStyle />
      <Browser />
      <Page>
        <Site>
          <Header />
          <Main>
            <Rail>
              <RailLink href="#projects" aria-label="Projects"><FolderFlask /></RailLink>
              <RailLink href="#experiments" aria-label="Experiments" $active><Flask /></RailLink>
              <RailLink href="#services" aria-label="Web services"><Globe /></RailLink>
              <RailLink href="#datasets" aria-label="Datasets"><Cylinders /></RailLink>
              <RailLink href="#models" aria-label="Trained models"><Cube /></RailLink>
              <RailLink href="#settings" aria-label="Settings"><Gear /></RailLink>
            </Rail>
            <Workbench>
              <LeftPalette />
              <ExperimentCanvas />
              <SidePanel />
              <Backdrop><SelectColumns /></Backdrop>
            </Workbench>
          </Main>
          <CommandBar>
            <NewButton>
              <Svg w={25}><path d="M9 0h7v9h9v7h-9v9H9v-9H0V9h9Z" fill="#fff" /></Svg>
              NEW
            </NewButton>
            <Commands>
              {commands.map(([icon, label]) => (
                <Command key={label}>
                  <Svg w={22} h={22} vb="0 0 22 22">{cmdIcons[icon]}</Svg>
                  <span>{label}</span>
                </Command>
              ))}
            </Commands>
          </CommandBar>
        </Site>
        <Scrollbar />
      </Page>
      <WindowsTaskbar />
    </Screen>
  );
}
